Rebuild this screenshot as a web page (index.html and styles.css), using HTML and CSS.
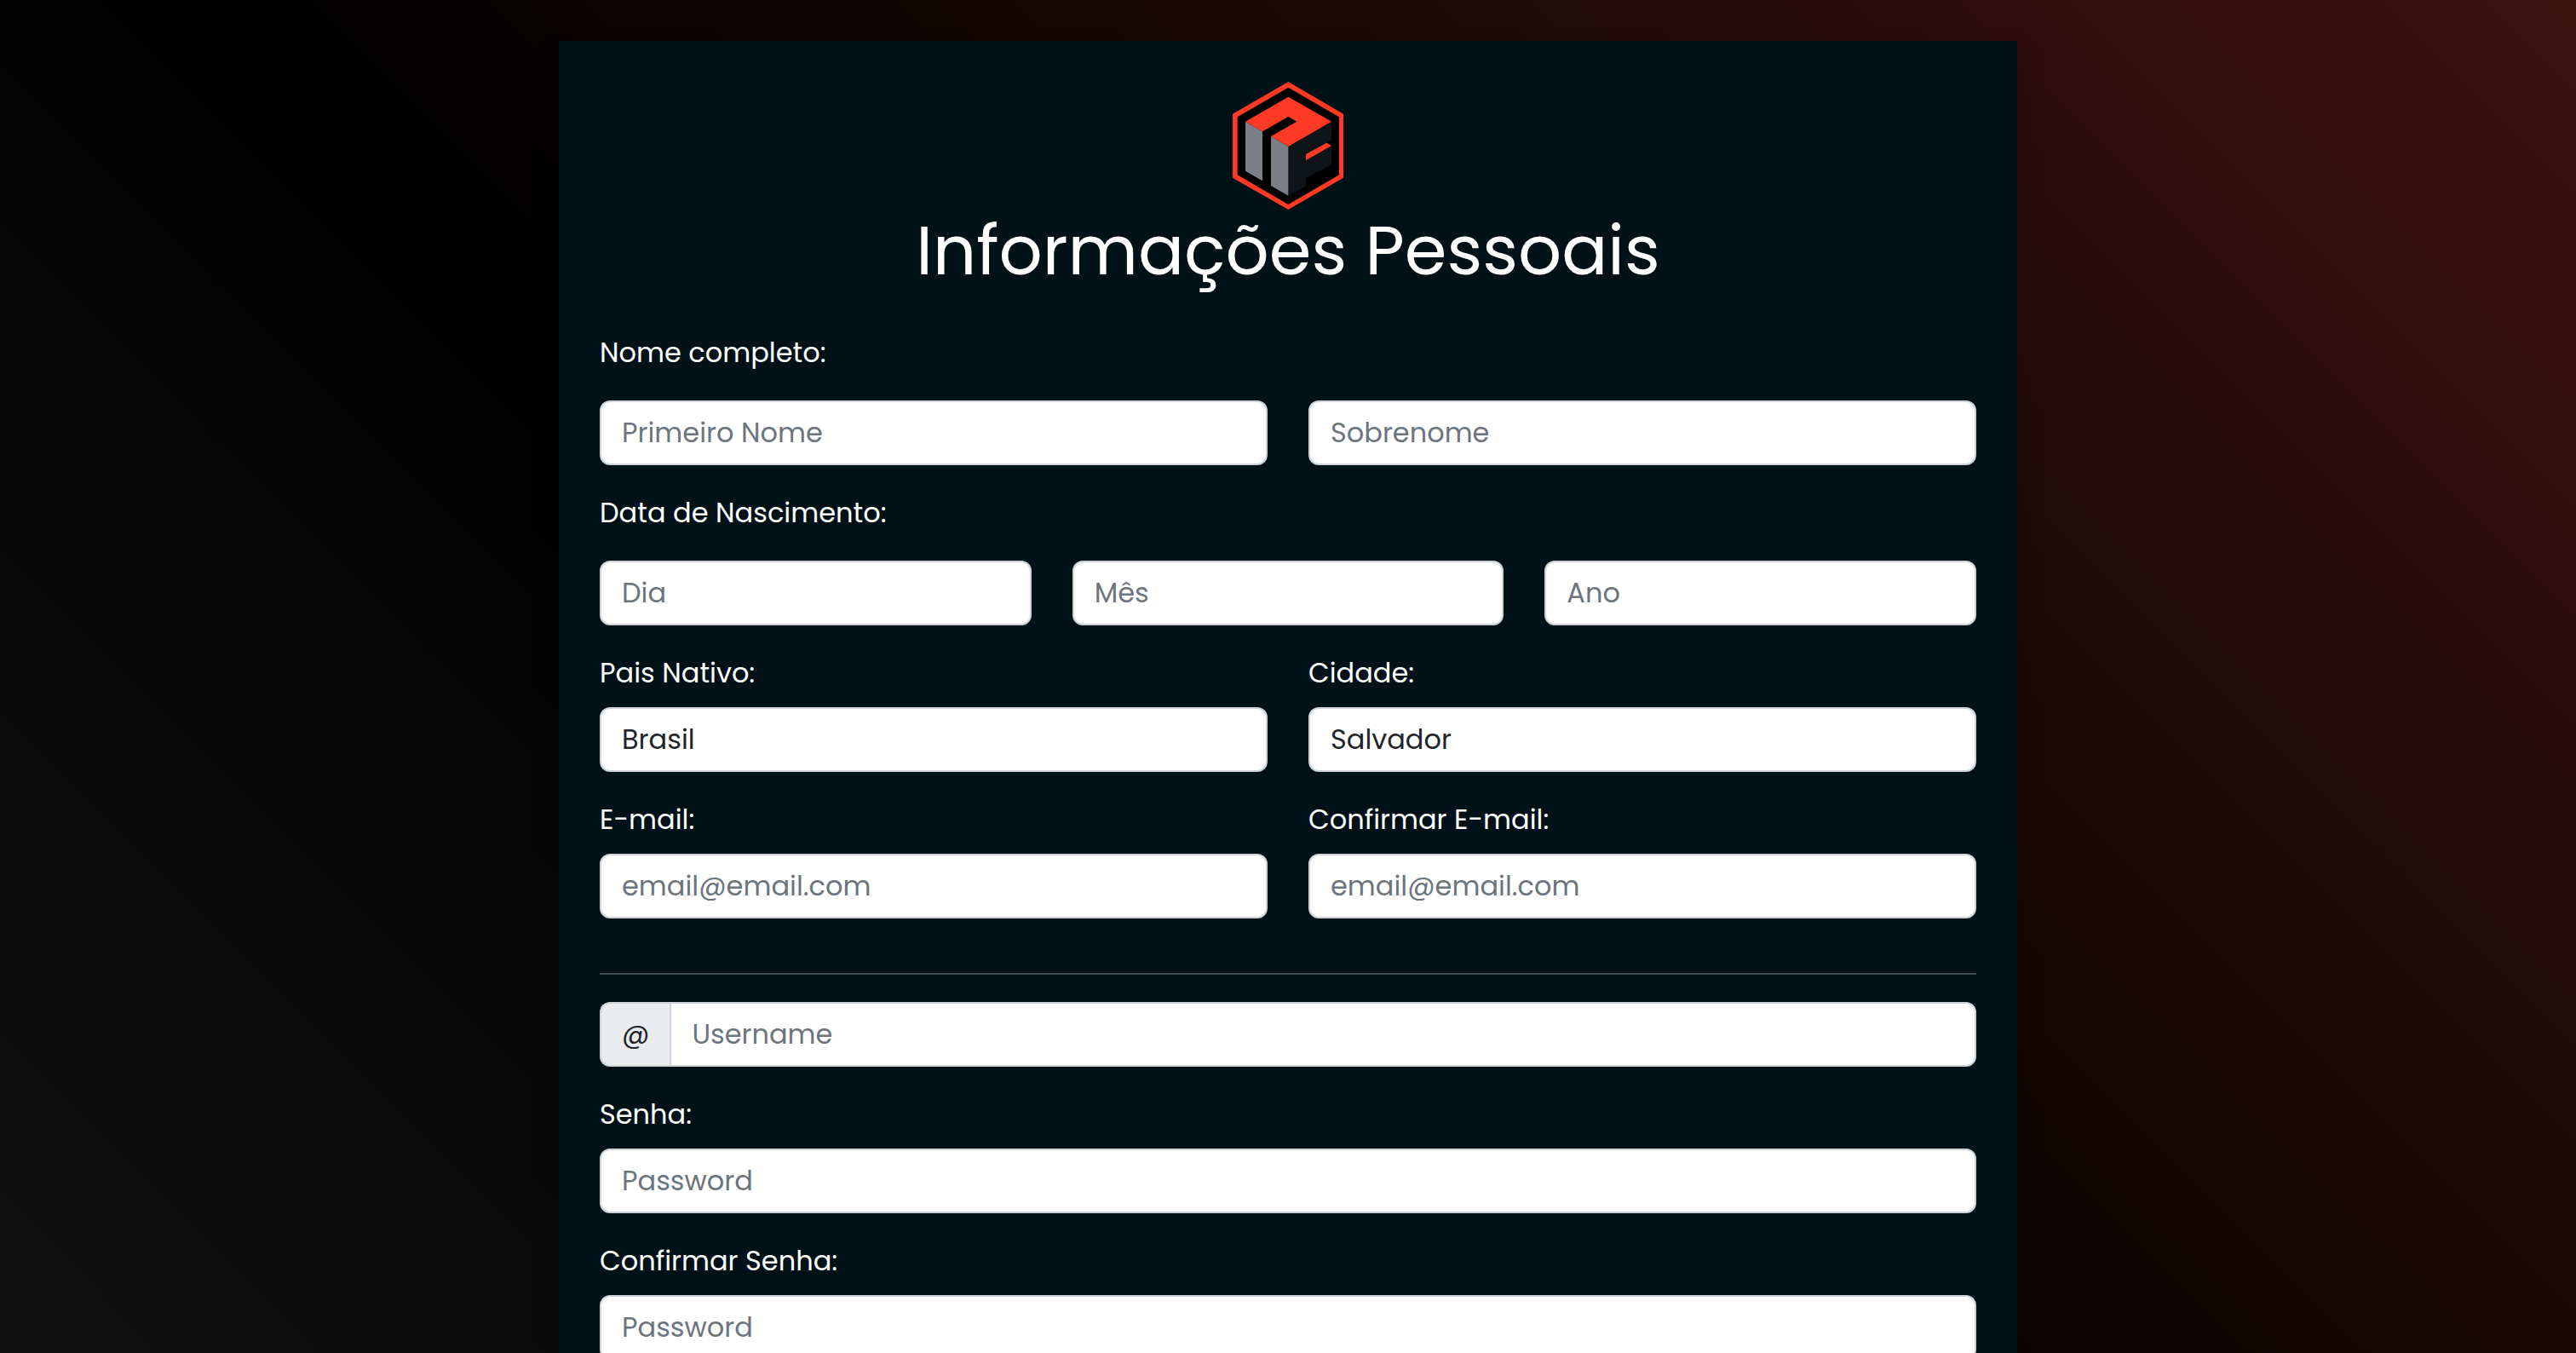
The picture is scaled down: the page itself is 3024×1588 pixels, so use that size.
FILE: index.html
```
<!DOCTYPE html>
<html lang="pt-BR">
<head>
<meta charset="utf-8">
<meta name="viewport" content="width=device-width, initial-scale=1">
<title>Informações Pessoais</title>
<link rel="stylesheet" href="styles.css">
</head>
<body>
<main class="card">
  <header class="card-header">
    <svg class="logo" viewBox="51 48 396 450" aria-hidden="true">
      <path fill="#ff3a24" d="M250 48 444 161V386L250 498 54 386V161Z"/>
      <path fill="#000" d="M250 68 429 172V376L250 480 71 376V172Z"/>
      <path fill="#0f1418" d="M250 276 402 188V252L385 263 402 273V339L312 388V415L250 449Z"/>
      <path fill="#7b7e85" d="M99 188 159 223V397L99 362ZM189 240 250 276V449L189 414Z"/>
      <path fill="#ff3a24" d="M250 101 402 188 250 276 189 240 280 188 250 171 159 223 99 188ZM312 303 385 263 402 273 312 325Z"/>
    </svg>
    <h1 class="title">Informações Pessoais</h1>
  </header>

  <form class="form">
    <fieldset class="group">
      <legend class="legend">Nome completo:</legend>
      <div class="row">
        <input class="control" type="text" placeholder="Primeiro Nome" aria-label="Primeiro Nome">
        <input class="control" type="text" placeholder="Sobrenome" aria-label="Sobrenome">
      </div>
    </fieldset>

    <fieldset class="group">
      <legend class="legend">Data de Nascimento:</legend>
      <div class="row">
        <input class="control" type="text" placeholder="Dia" aria-label="Dia">
        <input class="control" type="text" placeholder="Mês" aria-label="Mês">
        <input class="control" type="text" placeholder="Ano" aria-label="Ano">
      </div>
    </fieldset>

    <div class="row">
      <div class="field">
        <label class="label" for="pais">Pais Nativo:</label>
        <input class="control" id="pais" type="text" value="Brasil">
      </div>
      <div class="field">
        <label class="label" for="cidade">Cidade:</label>
        <input class="control" id="cidade" type="text" value="Salvador">
      </div>
    </div>

    <div class="row">
      <div class="field">
        <label class="label" for="email">E-mail:</label>
        <input class="control" id="email" type="email" placeholder="email@email.com">
      </div>
      <div class="field">
        <label class="label" for="email2">Confirmar E-mail:</label>
        <input class="control" id="email2" type="email" placeholder="email@email.com">
      </div>
    </div>

    <hr class="divider">

    <div class="input-group">
      <label class="addon" for="username">@</label>
      <input class="control" id="username" type="text" placeholder="Username" aria-label="Username">
    </div>

    <div class="field">
      <label class="label" for="senha">Senha:</label>
      <input class="control" id="senha" type="password" placeholder="Password">
    </div>

    <div class="field">
      <label class="label" for="senha2">Confirmar Senha:</label>
      <input class="control" id="senha2" type="password" placeholder="Password">
    </div>
  </form>
</main>
</body>
</html>
```
FILE: styles.css
```
* {
  box-sizing: border-box;
}

html {
  scrollbar-width: none;
}

body {
  margin: 0;
  min-height: 100vh;
  padding: 48px;
  background: linear-gradient(45deg, #121112 0%, #000 40%, #3c120f 100%) fixed;
  color: #fff;
  font-family: Poppins, Inter, sans-serif;
  font-size: 32px;
  line-height: 48px;
}

.card {
  max-width: 1712px;
  margin: 0 auto;
  padding: 48px;
  background: #001117;
  box-shadow: 0 16px 32px rgba(0, 0, 0, 0.15);
}

.card-header {
  display: flex;
  flex-direction: column;
  align-items: center;
  margin-bottom: 48px;
}

.logo {
  width: 132px;
  height: 150px;
}

.title {
  margin: 0;
  font-size: 80px;
  font-weight: 400;
  line-height: 96px;
  text-align: center;
}

.form {
  display: flex;
  flex-direction: column;
  gap: 32px;
}

.group {
  min-width: 0;
  margin: 0;
  padding: 0;
  border: 0;
}

.legend {
  margin-bottom: 32px;
  padding: 0;
}

.row {
  display: flex;
  gap: 48px;
}

.row > * {
  flex: 1 1 0;
  min-width: 0;
}

.label {
  display: block;
  margin-bottom: 16px;
}

.control {
  display: block;
  width: 100%;
  margin: 0;
  padding: 12px 24px;
  border: 2px solid #ced4da;
  border-radius: 12px;
  background: #fff;
  color: #212529;
  font: inherit;
}

.control::placeholder {
  color: #6c757d;
  opacity: 1;
}

.divider {
  width: 100%;
  height: 2px;
  margin: 32px 0 0;
  border: 0;
  background: #404d51;
}

.input-group {
  display: flex;
}

.addon {
  padding: 12px 24px;
  border: 2px solid #ced4da;
  border-right: 0;
  border-radius: 12px 0 0 12px;
  background: #e9ecef;
  color: #212529;
}

.input-group .control {
  flex: 1;
  min-width: 0;
  border-radius: 0 12px 12px 0;
}
```
